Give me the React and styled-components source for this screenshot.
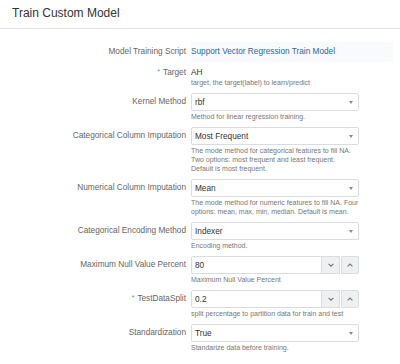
import React from "react";
import styled, { createGlobalStyle } from "styled-components";

const GlobalStyle = createGlobalStyle`
  html, body { margin: 0; padding: 0; background: #fff; }
  body { font-family: "Liberation Sans", Arial, sans-serif; }
`;

const Page = styled.div`
  width: 400px;
  height: 364px;
  overflow: hidden;
  background: #fff;
`;

const Header = styled.header`
  border-bottom: 1px solid #e2e2e2;
  display: flex;
  align-items: center;
  padding: 0 0 2px 12px;
  box-sizing: border-box;
  height: 29px;
`;

const Title = styled.h1`
  margin: 0;
  font-size: 12px;
  font-weight: normal;
  color: #333;
`;

const Form = styled.div`
  display: flex;
  flex-direction: column;
  gap: 6px;
  padding-top: 13px;
`;

const Row = styled.div`
  display: grid;
  grid-template-columns: 186px auto;
  column-gap: 5px;
  align-items: start;
`;

const Label = styled.div`
  text-align: right;
  font-size: 8.25px;
  line-height: ${(p) => p.$lh || "18px"};
  color: #666;
  white-space: nowrap;
`;

const Req = styled.span`
  color: #5b8fcf;
  font-size: 7px;
  margin-right: 3px;
  position: relative;
  top: -1px;
`;

const Field = styled.div`
  display: flex;
  flex-direction: column;
  width: ${(p) => (p.$wide ? "202px" : "168px")};
`;

const ReadOnly = styled.div`
  height: 20px;
  line-height: 20px;
  font-size: 8.25px;
  color: ${(p) => (p.$link ? "#2d66a0" : "#333")};
  background: ${(p) => (p.$tint ? "#f8fafd" : "transparent")};
  white-space: nowrap;
`;

const Value = styled.div`
  font-size: 8.25px;
  line-height: 10px;
  color: #333;
`;

const Help = styled.div`
  font-size: 7px;
  line-height: 9px;
  color: #777;
  margin-top: ${(p) => (p.$tight ? "0" : "1px")};
  white-space: nowrap;
`;

const SelectBox = styled.div`
  box-sizing: border-box;
  height: 18px;
  border: 1px solid #d9dde1;
  border-radius: 2px;
  background: #fff;
  display: flex;
  align-items: center;
  justify-content: space-between;
  padding: 0 4px 0 3px;
  font-size: 8.25px;
  color: #333;
`;

const Caret = styled.span`
  width: 0;
  height: 0;
  border-left: 2.5px solid transparent;
  border-right: 2.5px solid transparent;
  border-top: 3px solid #888;
  margin-right: 1px;
`;

const NumberWrap = styled.div`
  display: flex;
  height: 18px;
`;

const NumberInput = styled.div`
  box-sizing: border-box;
  width: 131px;
  height: 18px;
  border: 1px solid #d9dde1;
  border-radius: 2px 0 0 2px;
  display: flex;
  align-items: center;
  padding-left: 3px;
  font-size: 8.25px;
  color: #333;
`;

const SpinButton = styled.div`
  box-sizing: border-box;
  width: 18px;
  height: 18px;
  margin-left: ${(p) => (p.$gap ? "1px" : "0")};
  border: 1px solid #d9dde1;
  border-left: ${(p) => (p.$gap ? "1px solid #d9dde1" : "none")};
  border-radius: ${(p) => (p.$last ? "0 2px 2px 0" : "0")};
  background: #eef0f2;
  display: flex;
  align-items: center;
  justify-content: center;
`;

const Chevron = ({ up }) => (
  <svg width="6" height="4" viewBox="0 0 6 4">
    <polyline
      points={up ? "0.6,3.4 3,1 5.4,3.4" : "0.6,0.8 3,3.2 5.4,0.8"}
      fill="none"
      stroke="#7a7a7a"
      strokeWidth="1.2"
    />
  </svg>
);

const Select = ({ value }) => (
  <SelectBox>
    <span>{value}</span>
    <Caret />
  </SelectBox>
);

const Spinner = ({ value }) => (
  <NumberWrap>
    <NumberInput>{value}</NumberInput>
    <SpinButton>
      <Chevron />
    </SpinButton>
    <SpinButton $gap $last>
      <Chevron up />
    </SpinButton>
  </NumberWrap>
);

const rows = [
  {
    label: "Kernel Method",
    type: "select",
    value: "rbf",
    help: ["Method for linear regression training."],
  },
  {
    label: "Categorical Column Imputation",
    type: "select",
    value: "Most Frequent",
    help: [
      "The mode method for categorical features to fill NA.",
      "Two options: most frequent and least frequent.",
      "Default is most frequent.",
    ],
  },
  {
    label: "Numerical Column Imputation",
    type: "select",
    value: "Mean",
    help: [
      "The mode method for numeric features to fill NA. Four",
      "options: mean, max, min, median. Default is mean.",
    ],
  },
  {
    label: "Categorical Encoding Method",
    type: "select",
    value: "Indexer",
    help: ["Encoding method."],
  },
  {
    label: "Maximum Null Value Percent",
    type: "number",
    value: "80",
    help: ["Maximum Null Value Percent"],
  },
  {
    label: "TestDataSplit",
    type: "number",
    value: "0.2",
    required: true,
    help: ["split percentage to partition data for train and test"],
  },
  {
    label: "Standardization",
    type: "select",
    value: "True",
    help: ["Standarize data before training."],
  },
];

export default function App() {
  return (
    <Page>
      <GlobalStyle />
      <Header>
        <Title>Train Custom Model</Title>
      </Header>
      <Form>
        <Row>
          <Label $lh="20px">Model Training Script</Label>
          <Field $wide>
            <ReadOnly $link $tint>
              Support Vector Regression Train Model
            </ReadOnly>
          </Field>
        </Row>
        <Row>
          <Label $lh="10px">
            <Req>*</Req>Target
          </Label>
          <Field $wide>
            <Value>AH</Value>
            <Help $tight>target, the target(label) to learn/predict</Help>
          </Field>
        </Row>
        {rows.map((r) => (
          <Row key={r.label}>
            <Label>
              {r.required && <Req>*</Req>}
              {r.label}
            </Label>
            <Field>
              {r.type === "select" ? (
                <Select value={r.value} />
              ) : (
                <Spinner value={r.value} />
              )}
              <Help>
                {r.help.map((h) => (
                  <div key={h}>{h}</div>
                ))}
              </Help>
            </Field>
          </Row>
        ))}
      </Form>
    </Page>
  );
}
